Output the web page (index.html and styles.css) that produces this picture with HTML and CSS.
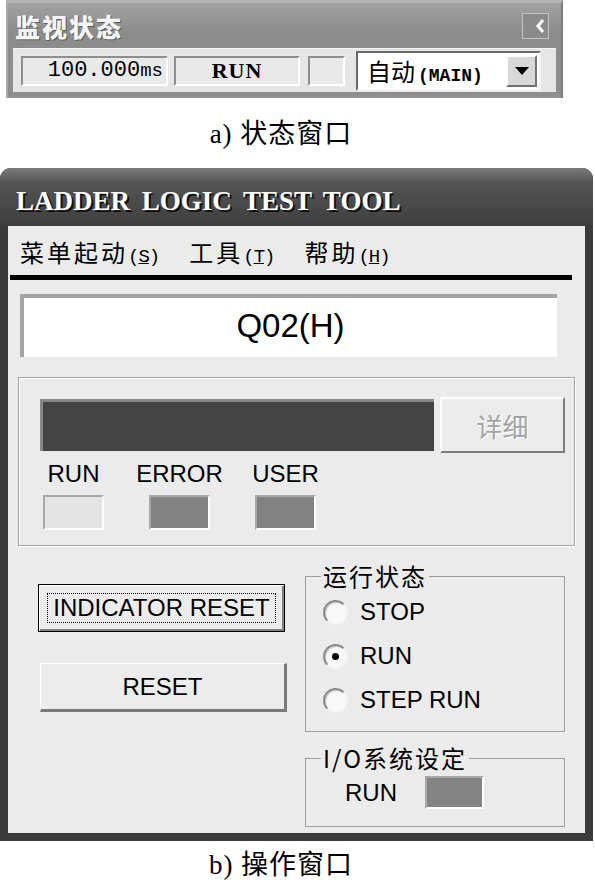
FILE: index.html
```html
<!DOCTYPE html>
<html>
<head>
    <title>Ladder Logic Test Tool</title>
    <meta charset="UTF-8">
    <link rel="stylesheet" href="styles.css">
</head>
<body>
    <div class="status">
        <div class="status-title">
            <span class="status-name">监视状态</span>
            <span class="status-close">
                <svg width="25" height="24" viewBox="0 0 25 24"><polyline points="20,6 15,12 20,18" fill="none" stroke="#fff" stroke-width="3"/></svg>
            </span>
        </div>
        <div class="status-row">
            <div class="field field-time">100.000<span class="ms">ms</span></div>
            <div class="field field-mode">RUN</div>
            <div class="field field-empty"></div>
            <div class="combo">
                <span class="combo-text">自动<span class="combo-main">(MAIN)</span></span>
                <span class="combo-btn">
                    <svg width="14" height="8" viewBox="0 0 14 8"><polygon points="0,0 14,0 7,8" fill="#000"/></svg>
                </span>
            </div>
        </div>
    </div>

    <p class="caption caption-a">a) 状态窗口</p>

    <div class="window">
        <div class="win-title">LADDER LOGIC TEST TOOL</div>
        <div class="client">
            <div class="menu">
                <span class="menu-item">菜单起动<span class="key">(<u>S</u>)</span></span>
                <span class="menu-item">工具<span class="key">(<u>T</u>)</span></span>
                <span class="menu-item">帮助<span class="key">(<u>H</u>)</span></span>
            </div>
            <div class="menu-rule"></div>

            <div class="cpu-name">Q02(H)</div>

            <div class="led-group">
                <div class="led-top">
                    <div class="error-bar"></div>
                    <div class="btn-detail">详细</div>
                </div>
                <div class="leds">
                    <div class="led"><span class="led-label">RUN</span><span class="lamp lamp-off"></span></div>
                    <div class="led"><span class="led-label">ERROR</span><span class="lamp"></span></div>
                    <div class="led"><span class="led-label">USER</span><span class="lamp"></span></div>
                </div>
            </div>

            <div class="lower">
                <div class="buttons">
                    <div class="btn btn-focus"><span class="focus-rect">INDICATOR RESET</span></div>
                    <div class="btn btn-reset">RESET</div>
                </div>
                <div class="side">
                    <fieldset class="frame run-state">
                        <legend>运行状态</legend>
                        <div class="radio-row"><span class="radio"></span>STOP</div>
                        <div class="radio-row"><span class="radio checked"></span>RUN</div>
                        <div class="radio-row"><span class="radio"></span>STEP RUN</div>
                    </fieldset>
                    <fieldset class="frame io">
                        <legend>I/O系统设定</legend>
                        <div class="io-row"><span class="io-label">RUN</span><span class="lamp io-lamp"></span></div>
                    </fieldset>
                </div>
            </div>
        </div>
    </div>

    <p class="caption caption-b">b) 操作窗口</p>
</body>
</html>
```

FILE: styles.css
```css
body {
    margin: 0;
    width: 595px;
    background: #fff;
    color: #000;
    font-family: "Liberation Sans", "Noto Sans CJK SC", sans-serif;
}

/* status window */
.status {
    margin-left: 6px;
    width: 557px;
    height: 98px;
    box-sizing: border-box;
    display: flex;
    flex-direction: column;
    background: linear-gradient(#a2a2a2, #8c8c8c 30%, #8e8e8e);
    border-top: 3px solid #b4b4b4;
    border-left: 2px solid #a8a8a8;
    border-right: 2px solid #7c7c7c;
}
.status-title {
    height: 45px;
    display: flex;
    align-items: center;
    justify-content: space-between;
    padding: 0 12px 0 7px;
}
.status-name {
    font-family: "Noto Sans CJK SC", sans-serif;
    font-weight: 900;
    font-size: 25px;
    letter-spacing: 2px;
    color: #f4f4f4;
    text-shadow: 1px 1px 0 #5a5a5a;
}
.status-close {
    width: 25px;
    height: 24px;
    background: #8a8a8a;
    border: 1px solid #c4c4c4;
    display: flex;
}
.status-row {
    height: 43px;
    margin: 0 5px;
    padding-left: 8px;
    display: flex;
    align-items: center;
    background: #e6e6e6;
    border-top: 1px solid #f4f4f4;
}
.field {
    height: 30px;
    box-sizing: border-box;
    background: #e9e9e9;
    border: 2px solid;
    border-color: #8e8e8e #fff #fff #8e8e8e;
    font-family: "Liberation Mono", monospace;
    display: flex;
    align-items: center;
}
.field-time {
    width: 147px;
    justify-content: flex-end;
    padding-right: 3px;
    font-size: 22px;
}
.ms {
    font-size: 19px;
}
.field-mode {
    width: 126px;
    margin-left: 6px;
    justify-content: center;
    font-family: "Liberation Serif", serif;
    font-weight: bold;
    font-size: 22px;
    letter-spacing: 1px;
}
.field-empty {
    width: 37px;
    margin-left: 8px;
}
.combo {
    width: 185px;
    height: 40px;
    margin-left: 11px;
    box-sizing: border-box;
    background: #fff;
    border: 2px solid;
    border-color: #6a6a6a #f4f4f4 #f4f4f4 #6a6a6a;
    display: flex;
    align-items: center;
    justify-content: space-between;
    padding: 0 2px 0 9px;
}
.combo-text {
    font-family: "Noto Sans CJK SC", sans-serif;
    font-size: 24px;
}
.combo-main {
    font-family: "Liberation Mono", monospace;
    font-weight: bold;
    font-size: 18px;
    margin-left: 3px;
}
.combo-btn {
    width: 31px;
    height: 32px;
    box-sizing: border-box;
    background: #d8d8d8;
    border: 2px solid;
    border-color: #fff #707070 #707070 #fff;
    display: flex;
    align-items: center;
    justify-content: center;
}

.caption {
    width: 562px;
    margin: 0;
    text-align: center;
    font-family: "Liberation Serif", "Noto Sans CJK SC", serif;
    font-size: 27px;
    line-height: 30px;
    letter-spacing: 1px;
}
.caption-a {
    margin-top: 21px;
}
.caption-b {
    margin-top: 9px;
}

/* operation window */
.window {
    width: 593px;
    margin-top: 19px;
    box-sizing: border-box;
    padding: 0 8px 8px;
    background: #3a3a3a;
    border-radius: 11px 11px 0 0;
    overflow: hidden;
}
.win-title {
    height: 58px;
    margin: 0 -8px;
    padding-left: 16px;
    background: linear-gradient(#7c7c7c, #555 25%, #474747 70%, #3e3e3e);
    color: #fff;
    font-family: "Liberation Serif", serif;
    font-weight: bold;
    font-size: 27px;
    word-spacing: 5px;
    line-height: 66px;
    text-shadow: 2px 2px 0 #111;
}
.client {
    height: 607px;
    background: #ebebeb;
}
.menu {
    height: 49px;
    box-sizing: border-box;
    padding: 12px 0 0 12px;
    display: flex;
    gap: 30px;
}
.menu-item {
    font-family: "Noto Sans CJK SC", sans-serif;
    font-size: 24px;
    line-height: 28px;
    letter-spacing: 3px;
}
.key {
    font-family: "Liberation Mono", monospace;
    font-size: 19px;
    letter-spacing: -1px;
}
.menu-rule {
    width: 562px;
    height: 5px;
    margin-left: 2px;
    background: #000;
}

.cpu-name {
    width: 537px;
    height: 63px;
    margin: 14px 0 0 12px;
    box-sizing: border-box;
    background: #fff;
    border-top: 4px solid #a4a4a4;
    border-left: 4px solid #a4a4a4;
    text-align: center;
    font-size: 33px;
    line-height: 56px;
}

.led-group {
    width: 557px;
    height: 169px;
    margin: 20px 0 0 10px;
    box-sizing: border-box;
    padding: 19px 0 0 21px;
    border: 1px solid #a0a0a0;
    box-shadow: inset 1px 1px 0 #fff, 1px 1px 0 #fff;
}
.led-top {
    display: flex;
    align-items: flex-start;
}
.error-bar {
    width: 394px;
    height: 52px;
    margin-top: 2px;
    box-sizing: border-box;
    background: #444;
    border-top: 3px solid #888;
    border-left: 3px solid #888;
}
.btn-detail {
    width: 125px;
    height: 56px;
    margin-left: 6px;
    box-sizing: border-box;
    background: #ececec;
    border: 2px solid;
    border-color: #fff #7c7c7c #7c7c7c #fff;
    color: #a4a4a4;
    text-shadow: 1px 1px 0 #fff;
    font-family: "Noto Sans CJK SC", sans-serif;
    font-size: 26px;
    display: flex;
    align-items: center;
    justify-content: center;
}
.leds {
    display: flex;
    gap: 45px;
    margin: 7px 0 0 3px;
}
.led {
    width: 61px;
    display: flex;
    flex-direction: column;
    align-items: center;
}
.led-label {
    font-size: 24px;
    line-height: 28px;
    white-space: nowrap;
}
.lamp {
    display: block;
    width: 61px;
    height: 35px;
    box-sizing: border-box;
    background: #828282;
    border: 2px solid;
    border-color: #a8a8a8 #fff #fff #a8a8a8;
}
.led .lamp {
    margin-top: 7px;
}
.lamp-off {
    background: #e4e4e4;
}

.lower {
    display: flex;
}
.buttons {
    width: 297px;
}
.btn {
    width: 247px;
    box-sizing: border-box;
    background: #ececec;
    font-size: 24px;
    white-space: nowrap;
    display: flex;
    align-items: center;
    justify-content: center;
}
.btn-focus {
    height: 48px;
    margin: 38px 0 0 30px;
    padding: 8px;
    border: 1px solid #000;
    box-shadow: inset 1px 1px 0 #fff, inset -2px -2px 0 #808080;
}
.focus-rect {
    flex: 1;
    align-self: stretch;
    border: 1px dotted #000;
    display: flex;
    align-items: center;
    justify-content: center;
}
.btn-reset {
    height: 49px;
    margin: 31px 0 0 32px;
    border: solid;
    border-width: 1px 3px 3px 1px;
    border-color: #fff #7a7a7a #7a7a7a #fff;
}

.side {
    width: 260px;
}
.frame {
    margin: 0;
    box-sizing: border-box;
    border: 1px solid #9c9c9c;
    padding: 0 0 0 17px;
}
.frame legend {
    padding: 0 2px;
    margin-left: -2px;
    font-family: "Noto Sans CJK SC", sans-serif;
    font-size: 24px;
    line-height: 26px;
    letter-spacing: 2px;
}
.run-state {
    height: 169px;
    margin-top: 17px;
    padding-top: 1px;
}
.radio-row {
    height: 44px;
    display: flex;
    align-items: center;
    gap: 12px;
    font-size: 24px;
}
.radio {
    width: 25px;
    height: 25px;
    box-sizing: border-box;
    border-radius: 50%;
    background: #f8f8f8;
    border: 2px solid;
    border-color: #8a8a8a #f4f4f4 #f4f4f4 #8a8a8a;
    box-shadow: inset 1px 1px 0 #c8c8c8;
    display: flex;
    align-items: center;
    justify-content: center;
}
.radio.checked::after {
    content: "";
    width: 7px;
    height: 7px;
    border-radius: 50%;
    background: #000;
}
.io {
    height: 82px;
    margin-top: 13px;
}
.io-row {
    display: flex;
    align-items: center;
    margin: 5px 0 0 22px;
}
.io-label {
    width: 80px;
    font-size: 24px;
}
.io-lamp {
    width: 59px;
    height: 33px;
    background: #848484;
}
```
